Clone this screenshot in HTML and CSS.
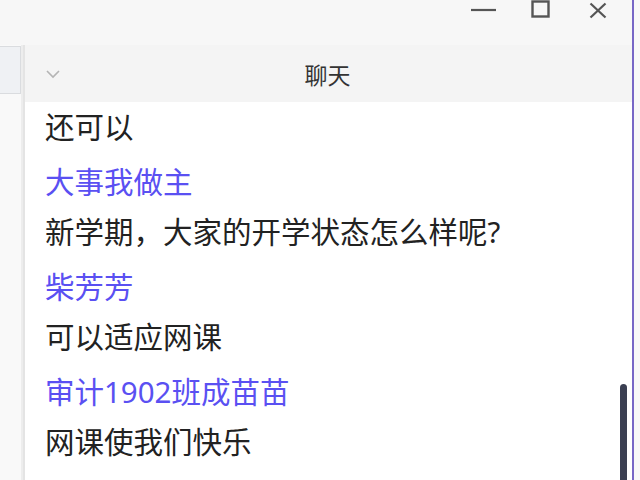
FILE: index.html
```html
<!DOCTYPE html>
<html lang="zh-CN">
<head>
    <meta charset="UTF-8">
    <title>聊天</title>
    <link rel="stylesheet" href="styles.css">
</head>
<body>
    <div class="window">
        <div class="titlebar">
            <svg class="ctl ctl-min" width="25" height="20" viewBox="0 0 25 20">
                <line x1="0" y1="10" x2="25" y2="10" stroke="#555" stroke-width="2.2"/>
            </svg>
            <svg class="ctl ctl-max" width="20" height="19" viewBox="0 0 20 19">
                <rect x="1.5" y="1.5" width="16" height="15" fill="none" stroke="#555" stroke-width="2.4"/>
            </svg>
            <svg class="ctl ctl-close" width="20" height="19" viewBox="0 0 20 19">
                <line x1="2.5" y1="3.5" x2="17.5" y2="17.5" stroke="#555" stroke-width="2.2"/>
                <line x1="17.5" y1="3.5" x2="2.5" y2="17.5" stroke="#555" stroke-width="2.2"/>
            </svg>
        </div>

        <div class="main">
            <div class="sidebar">
                <div class="side-box"></div>
            </div>

            <div class="chat">
                <div class="chat-header">
                    <svg class="chevron" width="16" height="10" viewBox="0 0 16 10">
                        <polyline points="2,2 8,8 14,2" fill="none" stroke="#b4b4b4" stroke-width="1.6"/>
                    </svg>
                    <span class="chat-title">聊天</span>
                </div>

                <div class="messages">
                    <div class="msg-text">还可以</div>

                    <div class="msg-name">大事我做主</div>
                    <div class="msg-text">新学期，大家的开学状态怎么样呢?</div>

                    <div class="msg-name">柴芳芳</div>
                    <div class="msg-text">可以适应网课</div>

                    <div class="msg-name">审计1902班成苗苗</div>
                    <div class="msg-text">网课使我们快乐</div>

                    <div class="scroll-thumb"></div>
                </div>
            </div>
        </div>
    </div>
    <div class="edge"></div>
    <div class="outside"></div>
</body>
</html>
```

FILE: styles.css
```css
html, body {
    margin: 0;
    padding: 0;
    width: 640px;
    height: 480px;
    overflow: hidden;
}
body {
    display: flex;
    font-family: "Noto Sans", "Noto Sans CJK SC", sans-serif;
    background: #fafafa;
}
.window {
    width: 632px;
    height: 480px;
    display: flex;
    flex-direction: column;
    background: #f7f7f7;
}
.edge {
    width: 2px;
    background: #7867c6;
}
.outside {
    flex: 1;
    background: #f8f8f8;
}
.titlebar {
    height: 45px;
    flex-shrink: 0;
    display: flex;
    align-items: flex-start;
    justify-content: flex-end;
    padding-right: 24px;
    background: #f7f7f7;
}
.ctl {
    display: block;
}
.ctl-max {
    margin-left: 35px;
}
.ctl-close {
    margin-left: 37px;
}
.main {
    flex: 1;
    display: flex;
    min-height: 0;
}
.sidebar {
    width: 21px;
    background: #f9f9f9;
    border-right: 2px solid #ededed;
}
.side-box {
    height: 46px;
    background: #eff1f4;
    border: 1px solid #dadcdf;
    border-left: none;
    margin-top: 1px;
}
.chat {
    flex: 1;
    display: flex;
    flex-direction: column;
    border-left: 2px solid #e4e4e4;
    background: #ffffff;
}
.chat-header {
    height: 57px;
    flex-shrink: 0;
    display: flex;
    align-items: center;
    justify-content: center;
    position: relative;
    background: #f4f4f4;
}
.chevron {
    position: absolute;
    left: 20px;
    top: 24px;
}
.chat-title {
    font-size: 23px;
    color: #333;
    margin-left: -2px;
}
.messages {
    flex: 1;
    position: relative;
    padding-left: 20px;
    font-size: 29.5px;
}
.msg-text {
    line-height: 50px;
    color: #222;
    white-space: nowrap;
}
.msg-name {
    line-height: 50px;
    margin-top: 5px;
    color: #5a50f2;
    white-space: nowrap;
}
.scroll-thumb {
    position: absolute;
    right: 5px;
    top: 282px;
    width: 7px;
    height: 120px;
    border-radius: 4px 4px 0 0;
    background: #3b3f52;
}
```
